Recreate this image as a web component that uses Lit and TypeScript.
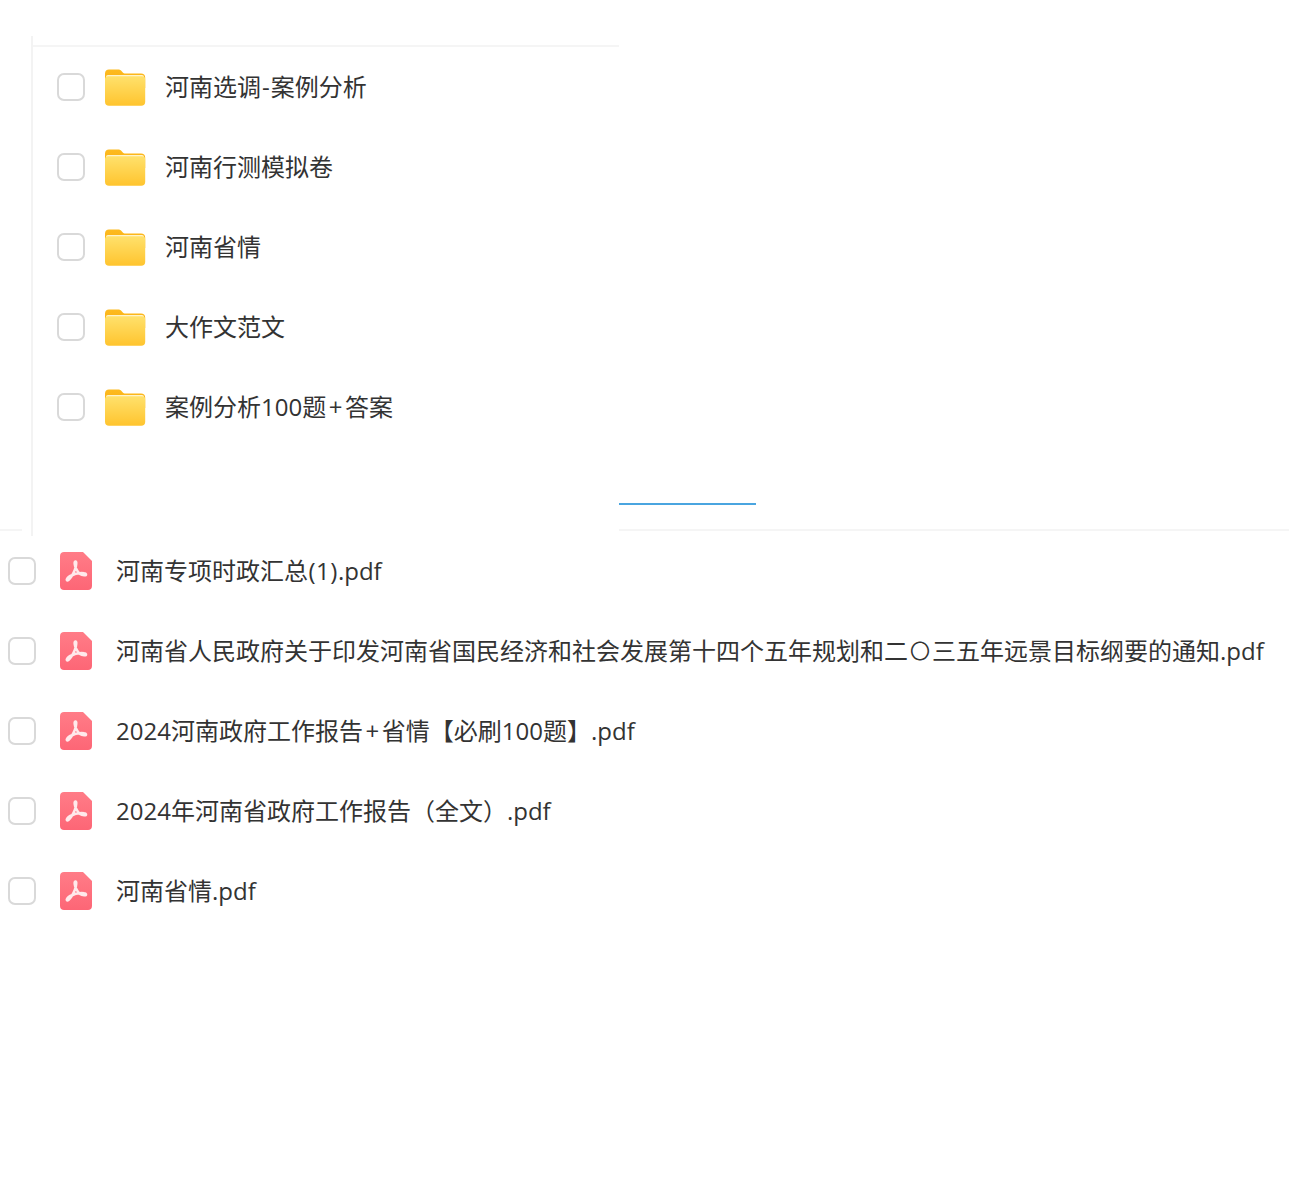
import { LitElement, html, css, svg } from 'lit';
import { customElement } from 'lit/decorators.js';

const FOLDERS = [
  '河南选调-案例分析',
  '河南行测模拟卷',
  '河南省情',
  '大作文范文',
  '案例分析100题+答案',
];

const FILES = [
  '河南专项时政汇总(1).pdf',
  '河南省人民政府关于印发河南省国民经济和社会发展第十四个五年规划和二〇三五年远景目标纲要的通知.pdf',
  '2024河南政府工作报告+省情【必刷100题】.pdf',
  '2024年河南省政府工作报告（全文）.pdf',
  '河南省情.pdf',
];

const folderIcon = svg`
  <svg class="folder" viewBox="0 0 42 38" width="42" height="38">
    <defs>
      <linearGradient id="fold-back" x1="0" y1="0" x2="0" y2="1">
        <stop offset="0" stop-color="#fdbb1f" />
        <stop offset="1" stop-color="#f9ab10" />
      </linearGradient>
      <linearGradient id="fold-front" x1="0" y1="0" x2="0" y2="1">
        <stop offset="0" stop-color="#ffe16c" />
        <stop offset="1" stop-color="#ffc42e" />
      </linearGradient>
    </defs>
    <path fill="url(#fold-back)" d="M1 5.500C1 3 2.600 1.600 5 1.600h9.200c1.500 0 2.300.5 3.300 1.500l1.300 1.300c.8.700 1.400 1 2.600 1H37c2.600 0 4.200 1.500 4.200 4V20H1z" />
    <rect x="2" y="7" width="38" height="6" rx="2" fill="#fff3c8" />
    <path fill="url(#fold-front)" d="M1 11.400c0-2 1.200-3.200 3.200-3.200h33.800c2 0 3.200 1.200 3.200 3.200v22.400c0 2.500-1.500 4-4 4H5c-2.500 0-4-1.500-4-4z" />
  </svg>
`;

const pdfIcon = svg`
  <svg class="pdf" viewBox="0 0 32 38" width="32" height="38">
    <defs>
      <linearGradient id="pdf-bg" x1="0" y1="0" x2="0" y2="1">
        <stop offset="0" stop-color="#ff7c87" />
        <stop offset="1" stop-color="#fd6676" />
      </linearGradient>
    </defs>
    <path fill="url(#pdf-bg)" d="M4 0h19L32 9v25c0 2.400-1.600 4-4 4H4c-2.400 0-4-1.600-4-4V4c0-2.400 1.600-4 4-4z" />
    <path fill="none" stroke="#ffe9eb" stroke-width="2.600" stroke-linecap="round" stroke-linejoin="round" d="M15.300 9.500c-1 .2-.9 3.600 1 7.500 1.800 3.700 5 6.800 9 6.200 1.200-.3.800-1.900-1-2-4.200-.4-9.500.2-14 2.800-2.500 1.500-4 3.400-3.400 4.200.7.700 2.600-1 4.300-3.500 2.400-3.600 4.800-9 5-13 .1-1.300-.2-2.300-.9-2.200z" />
  </svg>
`;

// YaHei sets "+", "-" and the brackets wider than the installed fonts do
function label(name: string) {
  return name.split(/([+\-()〇])/).map((part) => {
    if (part === '+') return html`<span class="plus">+</span>`;
    if (part === '-') return html`<span class="hyphen">-</span>`;
    if (part === '(' || part === ')') return html`<span class="paren">${part}</span>`;
    if (part === '〇') return html`<span class="ling">〇</span>`;
    return part;
  });
}

@customElement('app-root')
export class AppRoot extends LitElement {
  static override styles = css`
    :host {
      display: block;
      width: 1289px;
      height: 1183px;
      background: #fff;
      color: #333;
      font-family: 'Open Sans', 'Noto Sans CJK SC', sans-serif;
      font-size: 24px;
      overflow: hidden;
    }

    .top {
      display: flex;
      align-items: flex-start;
      height: 529px;
      border-bottom: 2px solid #f5f5f5;
      padding-left: 22px;
    }

    .panel {
      box-sizing: border-box;
      width: 597px;
      height: 500px;
      margin-top: 36px;
      padding-left: 9px;
      background: #fff;
      flex: none;
    }

    .panel-inner {
      height: 100%;
      padding-top: 9px;
      border-left: 2px solid #f3f3f3;
      box-sizing: border-box;
    }

    .panel-list {
      border-top: 2px solid #f5f5f5;
    }

    .tab-line {
      width: 137px;
      height: 2px;
      margin-top: 503px;
      background: #4aa5e0;
      flex: none;
    }

    .row {
      display: flex;
      align-items: center;
      height: 80px;
    }

    .panel .row {
      padding-left: 24px;
    }

    .files .row {
      padding-left: 8px;
    }

    .check {
      box-sizing: border-box;
      width: 28px;
      height: 28px;
      border: 2px solid #d9d9d9;
      border-radius: 7px;
      flex: none;
    }

    .folder {
      margin-left: 19px;
      flex: none;
    }

    .pdf {
      margin-left: 24px;
      flex: none;
    }

    .name {
      white-space: nowrap;
      line-height: 32px;
    }

    .panel .name {
      margin-left: 19px;
    }

    .files .name {
      margin-left: 24px;
    }

    .plus {
      margin: 0 2.6px;
    }

    .hyphen {
      margin: 0 1px;
    }

    .paren {
      margin: 0 0.5px;
    }

    .ling {
      margin: 0 2px;
      font-size: 20px;
      line-height: 0;
      vertical-align: 1px;
    }
  `;

  override render() {
    return html`
      <div class="top">
        <div class="panel">
          <div class="panel-inner">
            <div class="panel-list">
              ${FOLDERS.map(
                (name) => html`
                  <div class="row">
                    <span class="check"></span>
                    ${folderIcon}
                    <span class="name">${label(name)}</span>
                  </div>
                `
              )}
            </div>
          </div>
        </div>
        <div class="tab-line"></div>
      </div>
      <div class="files">
        ${FILES.map(
          (name) => html`
            <div class="row">
              <span class="check"></span>
              ${pdfIcon}
              <span class="name">${label(name)}</span>
            </div>
          `
        )}
      </div>
    `;
  }
}
